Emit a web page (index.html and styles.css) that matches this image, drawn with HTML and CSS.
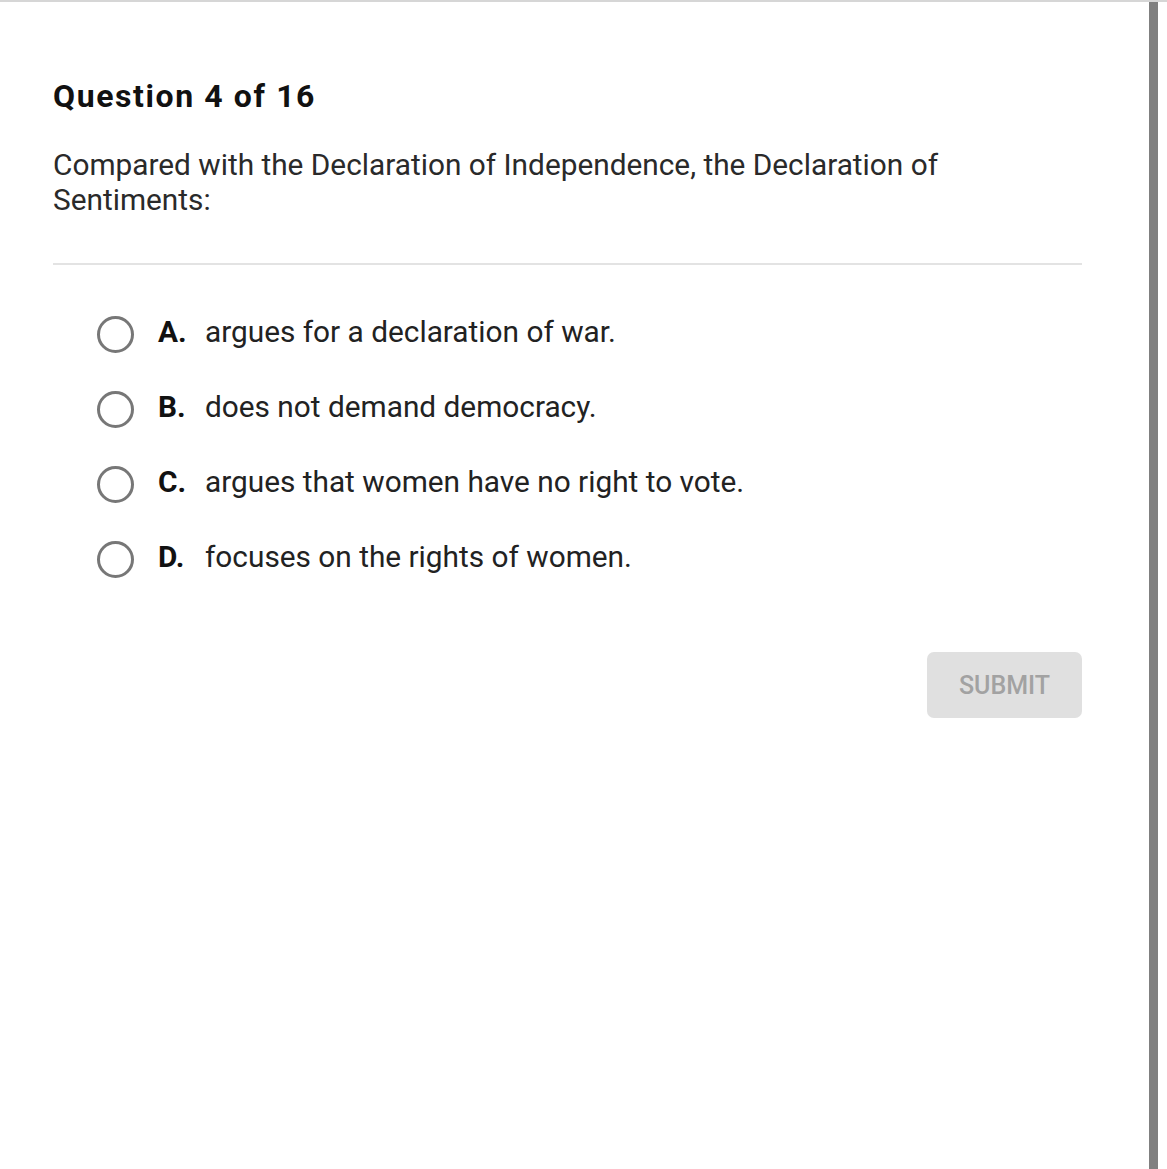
FILE: index.html
```html
<!DOCTYPE html>
<html>
<head>
<meta charset="utf-8">
<link rel="stylesheet" href="styles.css">
</head>
<body>
<div class="frame">
  <main class="page">
    <h1 class="title">Question 4 of 16</h1>
    <p class="prompt">Compared with the Declaration of Independence, the Declaration of Sentiments:</p>
    <hr class="divider">
    <ul class="options">
      <li class="option"><span class="radio"></span><span class="letter">A.</span><span class="text">argues for a declaration of war.</span></li>
      <li class="option"><span class="radio"></span><span class="letter">B.</span><span class="text">does not demand democracy.</span></li>
      <li class="option"><span class="radio"></span><span class="letter">C.</span><span class="text">argues that women have no right to vote.</span></li>
      <li class="option"><span class="radio"></span><span class="letter">D.</span><span class="text">focuses on the rights of women.</span></li>
    </ul>
    <div class="actions"><button class="submit">SUBMIT</button></div>
  </main>
  <div class="scrollbar"></div>
</div>
</body>
</html>
```
FILE: styles.css
```css
html, body { margin: 0; padding: 0; background: #fff; }
body { font-family: Roboto, "Liberation Sans", sans-serif; color: #212121; }
.frame { display: flex; height: 1169px; border-top: 2px solid #d6d6d6; box-sizing: border-box; }
.page { width: 1149px; padding: 0 67px 0 53px; box-sizing: border-box; }
.title { margin: 74px 0 0; font-size: 32px; font-weight: 700; letter-spacing: 1.6px; line-height: 40px; color: #111; }
.prompt { margin: 31px 0 0; font-size: 29.8px; line-height: 35px; color: #2a2a2a; max-width: 940px; }
.divider { margin: 46px 0 0; border: 0; height: 2px; background: #e3e3e3; }
.options { list-style: none; margin: 48px 0 0; padding: 0 0 0 44px; display: flex; flex-direction: column; gap: 39px; }
.option { display: flex; align-items: center; height: 36px; font-size: 29.8px; color: #222; }
.radio { width: 31px; height: 31px; border: 3px solid #777; border-radius: 50%; flex: none; margin-top: 6px; }
.letter { font-weight: 700; margin-left: 24px; width: 47px; color: #111; }
.actions { display: flex; justify-content: flex-end; margin-top: 78px; }
.submit { width: 155px; height: 66px; border: 0; border-radius: 7px; background: #e0e0e0; color: #a2a2a2; font-family: Roboto, "Liberation Sans", sans-serif; font-size: 25px; font-weight: 500; padding: 0; }
.scrollbar { width: 9px; background: #808080; flex: none; }
```
